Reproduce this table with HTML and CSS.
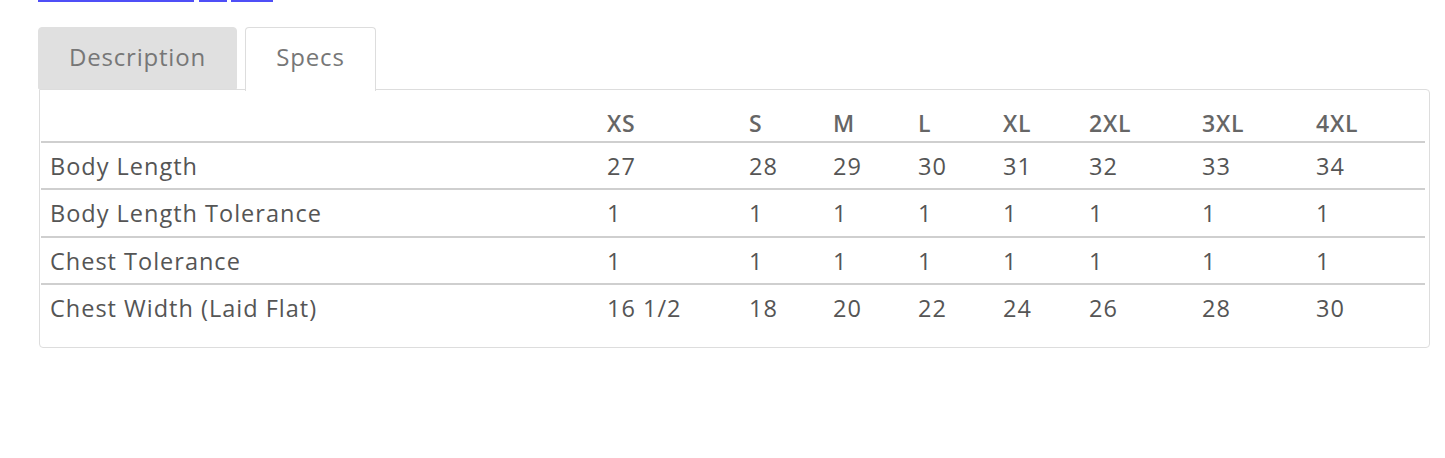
FILE: index.html
```html
<!DOCTYPE html>
<html lang="en">
<head>
<meta charset="utf-8">
<title>Specs</title>
<link rel="stylesheet" href="styles.css">
</head>
<body>
<div class="links">
  <span class="link l1"></span>
  <span class="link l2"></span>
  <span class="link l3"></span>
</div>
<div class="tabs">
  <div class="tab tab-desc">Description</div>
  <div class="tab tab-specs active">Specs</div>
</div>
<div class="panel">
  <table class="specs">
    <colgroup>
      <col class="c-label">
      <col class="c-xs">
      <col class="c-s">
      <col class="c-m">
      <col class="c-l">
      <col class="c-xl">
      <col class="c-2xl">
      <col class="c-3xl">
      <col class="c-4xl">
    </colgroup>
    <thead>
      <tr><th></th><th>XS</th><th>S</th><th>M</th><th>L</th><th>XL</th><th>2XL</th><th>3XL</th><th>4XL</th></tr>
    </thead>
    <tbody>
      <tr><td>Body Length</td><td>27</td><td>28</td><td>29</td><td>30</td><td>31</td><td>32</td><td>33</td><td>34</td></tr>
      <tr><td>Body Length Tolerance</td><td>1</td><td>1</td><td>1</td><td>1</td><td>1</td><td>1</td><td>1</td><td>1</td></tr>
      <tr><td>Chest Tolerance</td><td>1</td><td>1</td><td>1</td><td>1</td><td>1</td><td>1</td><td>1</td><td>1</td></tr>
      <tr><td>Chest Width (Laid Flat)</td><td>16 1/2</td><td>18</td><td>20</td><td>22</td><td>24</td><td>26</td><td>28</td><td>30</td></tr>
    </tbody>
  </table>
</div>
</body>
</html>
```

FILE: styles.css
```css
html, body {
  margin: 0;
  padding: 0;
  background: #ffffff;
}
body {
  font-family: "Open Sans", "DejaVu Sans", sans-serif;
  color: #555555;
  width: 1445px;
}
.links {
  display: flex;
  height: 2px;
  padding-left: 38px;
}
.link {
  display: block;
  height: 2px;
  background: #4f4ff7;
}
.l1 { width: 156px; }
.l2 { width: 28px; margin-left: 5px; }
.l3 { width: 42px; margin-left: 4px; }

.tabs {
  display: flex;
  gap: 8px;
  margin-top: 25px;
  padding-left: 38px;
  height: 62px;
  position: relative;
  z-index: 1;
}
.tab {
  box-sizing: border-box;
  height: 62px;
  display: flex;
  align-items: center;
  justify-content: center;
  font-size: 24px;
  letter-spacing: 0.8px;
  font-weight: 400;
  color: #777777;
  border-radius: 4px 4px 0 0;
}
.tab-desc {
  width: 199px;
  background: #e0e0e0;
  border: 1px solid #e0e0e0;
  padding-bottom: 4px;
}
.tab-specs {
  width: 131px;
  background: #ffffff;
  border: 1px solid #dddddd;
  border-bottom: none;
  height: 64px;
  padding-bottom: 6px;
}
.panel {
  box-sizing: border-box;
  margin-left: 39px;
  width: 1391px;
  border: 1px solid #dddddd;
  border-radius: 0 4px 4px 4px;
  padding: 9px 4px 17px 1px;
}
.specs {
  table-layout: fixed;
  border-collapse: collapse;
  width: 1384px;
}
.c-label { width: 557px; }
.c-xs { width: 142px; }
.c-s { width: 84px; }
.c-m { width: 85px; }
.c-l { width: 85px; }
.c-xl { width: 86px; }
.c-2xl { width: 113px; }
.c-3xl { width: 114px; }
.c-4xl { width: 118px; }

.specs th {
  text-align: left;
  font-weight: 600;
  color: #666666;
  font-size: 23px;
  letter-spacing: 0.8px;
  line-height: 30px;
  padding: 9px 9px 3px;
  white-space: nowrap;
}
.specs td {
  text-align: left;
  font-size: 23.5px;
  letter-spacing: 1px;
  line-height: 30px;
  padding: 8px 9px 7.3px;
  border-top: 2px solid #cfcfcf;
  white-space: nowrap;
  color: #555555;
}
```
